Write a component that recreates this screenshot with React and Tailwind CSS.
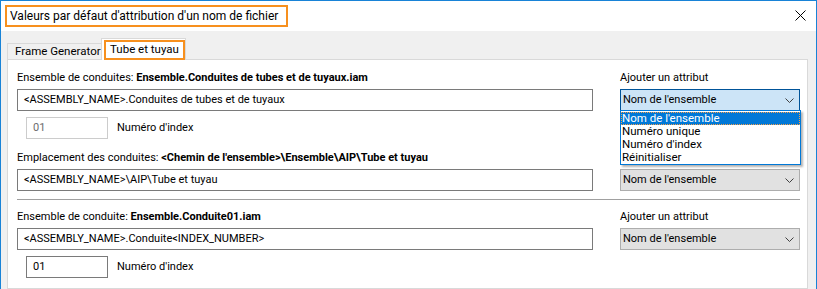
const font = { fontFamily: 'Roboto, "Noto Sans", sans-serif' };

const Chevron = () => (
    <svg width="9" height="5" viewBox="0 0 9 5" className="shrink-0">
        <polyline points="0.5,0.5 4.5,4.5 8.5,0.5" fill="none" stroke="#404040" strokeWidth="1" />
    </svg>
);

const Select = ({ focused, open }) => (
    <div className="relative w-[180px]">
        <div
            className={
                focused
                    ? 'h-[22px] border border-[#005499] bg-[#cce4f7] flex items-center justify-between pl-[2px] pr-[5px]'
                    : 'h-[22px] border border-[#adadad] bg-[#e1e1e1] flex items-center justify-between pl-[2px] pr-[5px]'
            }
        >
            <span>Nom de l'ensemble</span>
            <Chevron />
        </div>
        {open && (
            <div className="absolute left-0 top-[21px] w-[181px] bg-white border border-[#0078d7] shadow-[2px_2px_2px_rgba(0,0,0,0.3)] z-10 pt-[1px] leading-[13px] text-[11.5px]">
                <div className="h-[13px] bg-[#0078d7] text-white outline-1 outline-dotted outline-[#f5a04a] -outline-offset-1 pl-[1px] overflow-hidden">
                    Nom de l'ensemble
                </div>
                <div className="h-[13px] pl-[1px] overflow-hidden">Numéro unique</div>
                <div className="h-[13px] pl-[1px] overflow-hidden">Numéro d'index</div>
                <div className="h-[13px] pl-[1px] overflow-hidden">Réinitialiser</div>
            </div>
        )}
    </div>
);

const TextBox = ({ value }) => (
    <div className="w-[576px] h-[22px] border border-[#7a7a7a] bg-white flex items-center pl-[6px]">{value}</div>
);

const IndexRow = ({ disabled }) => (
    <div className="flex items-center pl-[9px] gap-[9px]">
        <div
            className={
                disabled
                    ? 'w-[82px] h-[22px] border border-[#cccccc] flex items-center pl-[6px] text-[#6d6d6d]'
                    : 'w-[82px] h-[22px] border border-[#7a7a7a] flex items-center pl-[6px]'
            }
        >
            01
        </div>
        <span>Numéro d'index</span>
    </div>
);

const Row = ({ left, right, className }) => (
    <div className={'flex gap-[27px] ' + (className || '')}>
        <div className="w-[576px] whitespace-nowrap">{left}</div>
        <div className="w-[180px]">{right}</div>
    </div>
);

const App = () => {
    return (
        <div
            className="w-[817px] h-[289px] overflow-hidden border-x border-t border-[#1883d7] flex flex-col text-[11px] text-black"
            style={font}
        >
            {/* title bar */}
            <div className="h-[30px] bg-white flex items-center justify-between shrink-0">
                <div className="ml-[4px] mt-[-1px] h-[22px] w-[283px] border-2 border-[#f7901e] flex items-center pl-[3px] text-[12px] whitespace-nowrap">
                    Valeurs par défaut d'attribution d'un nom de fichier
                </div>
                <svg width="11" height="11" viewBox="0 0 11 11" className="mr-[10px] mt-[-1px]">
                    <path d="M0.5 0.5 L10.5 10.5 M10.5 0.5 L0.5 10.5" stroke="#000" strokeWidth="1" />
                </svg>
            </div>

            {/* dialog body */}
            <div className="flex-1 bg-[#f0f0f0] pl-[6px] pr-[8px] flex flex-col">
                {/* tabs */}
                <div className="flex items-end h-[28px] relative z-10 shrink-0 text-[11.5px]">
                    <div className="h-[16px] border border-[#d9d9d9] border-b-0 bg-[#f0f0f0] flex items-center pl-[7px] w-[95px] whitespace-nowrap">
                        Frame Generator
                    </div>
                    <div className="h-[22px] -ml-[1px] -mb-[1px] border border-[#d9d9d9] border-b-0 bg-white w-[85px] flex items-start pt-[1px] pl-[2px]">
                        <span className="border-2 border-[#f7901e] h-[20px] w-[81px] flex items-center pl-[4px] whitespace-nowrap">
                            Tube et tuyau
                        </span>
                    </div>
                </div>

                {/* panel */}
                <div className="flex-1 bg-white border border-[#d9d9d9] pl-[9px] pt-[10px]">
                    <Row
                        className="h-[16px] leading-[16px]"
                        left={
                            <span>
                                Ensemble de conduites: <b>Ensemble.Conduites de tubes et de tuyaux.iam</b>
                            </span>
                        }
                        right={<span>Ajouter un attribut</span>}
                    />
                    <Row
                        className="mt-[3px]"
                        left={<TextBox value="<ASSEMBLY_NAME>.Conduites de tubes et de tuyaux" />}
                        right={<Select focused open />}
                    />
                    <div className="mt-[6px]">
                        <IndexRow disabled />
                    </div>
                    <div className="mt-[11px] h-[16px] leading-[16px] whitespace-nowrap">
                        Emplacement des conduites: <b>&lt;Chemin de l'ensemble&gt;\Ensemble\AIP\Tube et tuyau</b>
                    </div>
                    <Row
                        className="mt-[3px]"
                        left={<TextBox value="<ASSEMBLY_NAME>\AIP\Tube et tuyau" />}
                        right={<Select />}
                    />
                    <div className="mt-[8px] h-[1px] w-[783px] bg-[#a0a0a0]" />
                    <Row
                        className="mt-[9px] h-[16px] leading-[16px]"
                        left={
                            <span>
                                Ensemble de conduite: <b>Ensemble.Conduite01.iam</b>
                            </span>
                        }
                        right={<span>Ajouter un attribut</span>}
                    />
                    <Row
                        className="mt-[3px]"
                        left={<TextBox value="<ASSEMBLY_NAME>.Conduite<INDEX_NUMBER>" />}
                        right={<Select />}
                    />
                    <div className="mt-[6px]">
                        <IndexRow />
                    </div>
                </div>
            </div>
        </div>
    );
};

export default App;
